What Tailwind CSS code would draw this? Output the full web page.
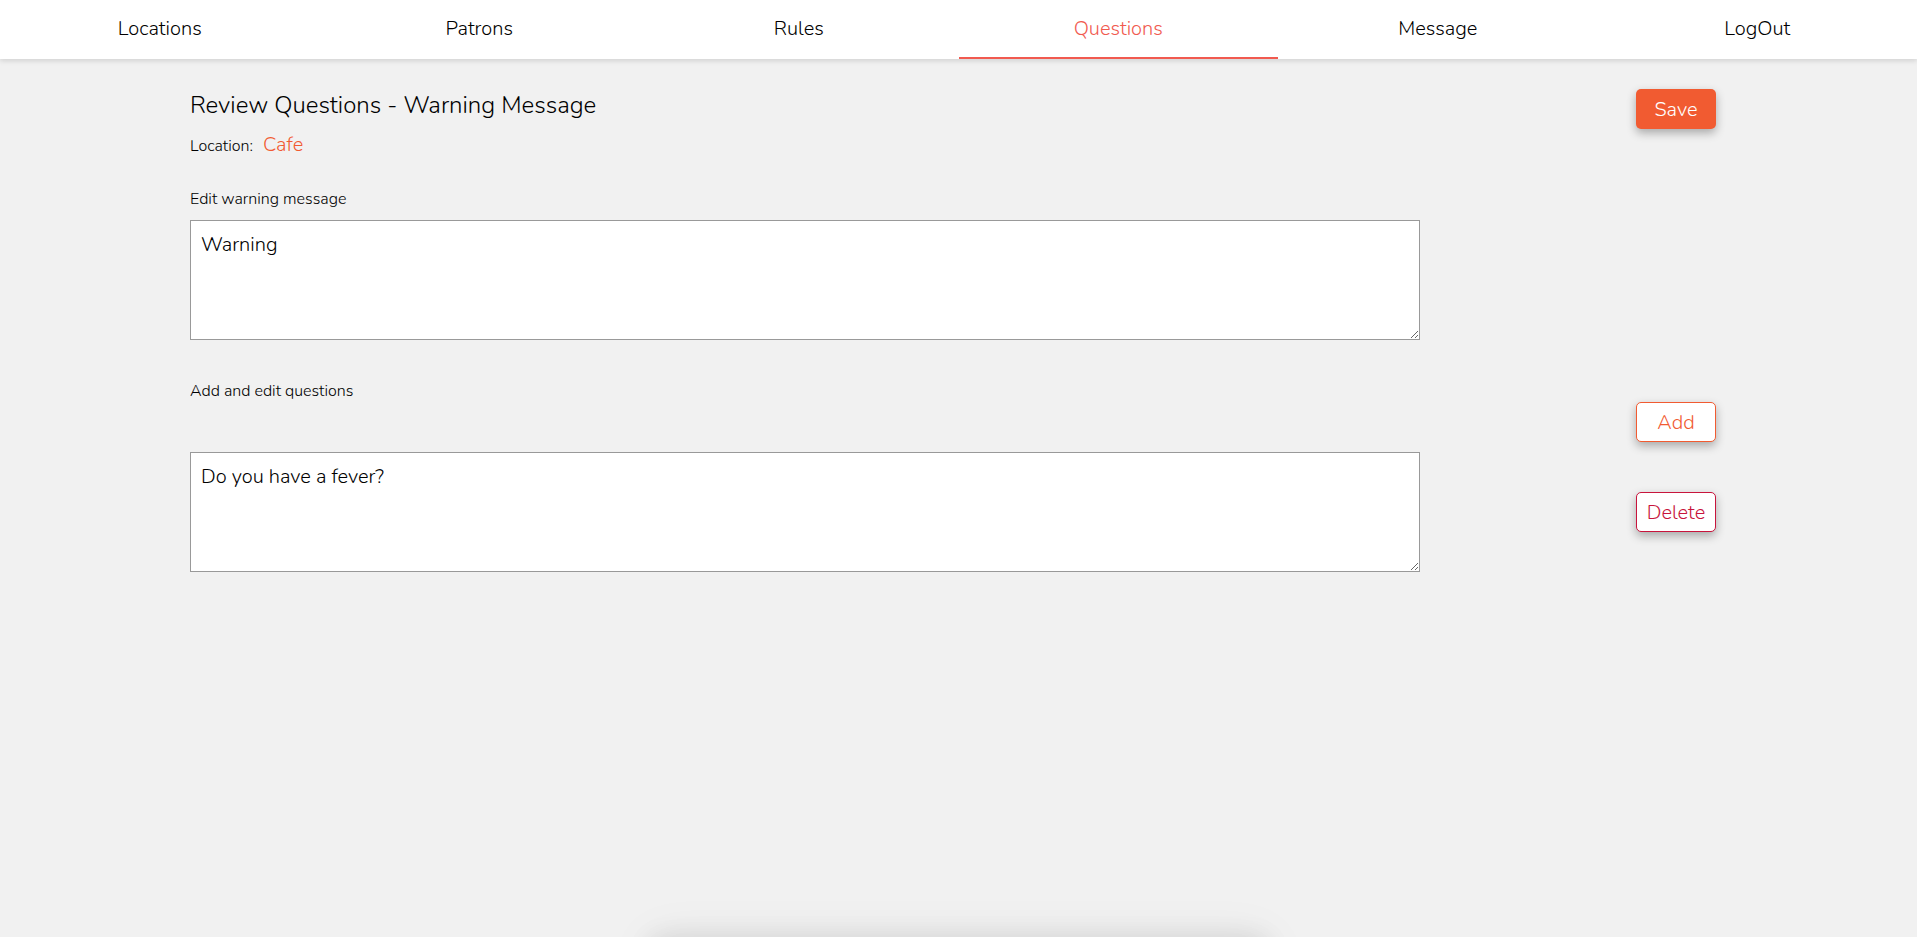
<!DOCTYPE html>
<html lang="en">
<head>
<meta charset="utf-8">
<meta name="viewport" content="width=device-width, initial-scale=1">
<title>Review Questions</title>
<script src="https://cdn.jsdelivr.net/npm/@tailwindcss/browser@4"></script>
</head>
<body class="min-h-screen bg-[#f1f1f1] font-[Nunito,Lato,sans-serif] text-xl font-light text-black">
<nav class="grid h-[59px] grid-cols-6 bg-white text-center leading-[58px] shadow-[0_2px_5px_rgba(0,0,0,0.13)]">
  <a href="#locations">Locations</a>
  <a href="#patrons">Patrons</a>
  <a href="#rules">Rules</a>
  <a href="#questions" aria-current="page" class="h-[59px] border-b-2 border-[#f15a4f] text-[#f15a4f]">Questions</a>
  <a href="#message">Message</a>
  <a href="#logout">LogOut</a>
</nav>

<main class="mx-auto w-full max-w-[1537px]">
  <header class="flex items-start justify-between pt-[30px] pr-[11px]">
    <div>
      <h1 class="text-2xl font-[350] leading-8">Review Questions - Warning Message</h1>
      <p class="mt-2 flex items-baseline gap-2.5 leading-8"><span class="text-base">Location:</span><span class="text-[#f15b31]">Cafe</span></p>
    </div>
    <button type="button" class="h-10 w-20 rounded-[5px] bg-[#f15b31] pt-px text-white shadow-[0_4px_10px_rgba(0,0,0,0.3)]">Save</button>
  </header>

  <section class="mt-[26px]">
    <label for="warning" class="block pb-[9px] text-base leading-6">Edit warning message</label>
    <textarea id="warning" class="block h-[120px] w-4/5 resize border border-[#999] bg-white p-2.5 leading-7 outline-none">Warning</textarea>
  </section>

  <section class="mt-[39px]">
    <div class="flex items-start justify-between pr-[11px]">
      <label for="question" class="text-base leading-6">Add and edit questions</label>
      <button type="button" class="mt-[23px] h-10 w-20 rounded-[5px] border border-[#f15b31] bg-white pt-px text-[#f15b31] shadow-[0_4px_10px_rgba(0,0,0,0.3)]">Add</button>
    </div>
    <div class="mt-2.5 flex items-center justify-between">
      <textarea id="question" class="block h-[120px] w-4/5 resize border border-[#999] bg-white p-2.5 leading-7 outline-none">Do you have a fever?</textarea>
      <button type="button" class="mr-[11px] h-10 w-20 rounded-[5px] border border-[#c8143c] bg-white pt-px text-[#c8143c] shadow-[0_4px_10px_rgba(0,0,0,0.3)]">Delete</button>
    </div>
  </section>
</main>

<!-- Notification panel resting just below the window edge -->
<div class="fixed top-full left-1/2 h-20 w-[620px] -translate-x-1/2 bg-white shadow-[0_0_30px_rgba(0,0,0,0.1),0_0_50px_rgba(0,0,0,0.06)]"></div>
</body>
</html>
